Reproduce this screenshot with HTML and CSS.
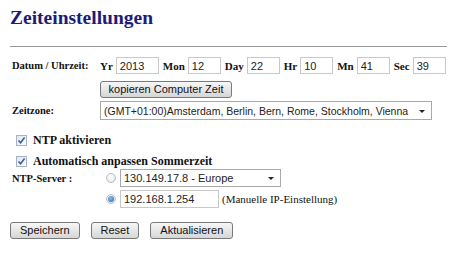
FILE: index.html
```html
<!DOCTYPE html>
<html lang="de">
<head>
  <meta charset="UTF-8" />
  <title>Zeiteinstellungen</title>
  <link rel="stylesheet" href="styles.css">
</head>
<body>
  <h1 class="title">Zeiteinstellungen</h1>
  <div class="rule"></div>

  <div class="form">
    <div class="row date-row">
      <span class="label">Datum / Uhrzeit:</span>
      <div class="fields">
        <span class="unit">Yr</span><input class="num wide" type="text" value="2013">
        <span class="unit">Mon</span><input class="num" type="text" value="12">
        <span class="unit">Day</span><input class="num" type="text" value="22">
        <span class="unit">Hr</span><input class="num" type="text" value="10">
        <span class="unit">Mn</span><input class="num" type="text" value="41">
        <span class="unit">Sec</span><input class="num" type="text" value="39">
      </div>
    </div>

    <div class="row copy-row">
      <span class="label"></span>
      <div><button class="btn">kopieren Computer Zeit</button></div>
    </div>

    <div class="row zone-row">
      <span class="label">Zeitzone:</span>
      <div class="select zone-select">
        <span class="select-text">(GMT+01:00)Amsterdam, Berlin, Bern, Rome, Stockholm, Vienna</span>
        <span class="arrow"></span>
      </div>
    </div>

    <div class="check-row first">
      <span class="check"><svg width="9" height="9" viewBox="0 0 9 9"><path d="M1.5 4.5 L3.6 6.8 L7.6 1.6" fill="none" stroke="#3a5fa8" stroke-width="1.6"/></svg></span>
      <span class="check-label">NTP aktivieren</span>
    </div>
    <div class="check-row">
      <span class="check"><svg width="9" height="9" viewBox="0 0 9 9"><path d="M1.5 4.5 L3.6 6.8 L7.6 1.6" fill="none" stroke="#3a5fa8" stroke-width="1.6"/></svg></span>
      <span class="check-label">Automatisch anpassen Sommerzeit</span>
    </div>

    <div class="row ntp-row">
      <span class="label">NTP-Server :</span>
      <div class="server-line">
        <span class="radio"></span>
        <div class="select server-select">
          <span class="select-text">130.149.17.8 - Europe</span>
          <span class="arrow"></span>
        </div>
      </div>
    </div>
    <div class="row manual-row">
      <span class="label"></span>
      <div class="server-line">
        <span class="radio on"></span>
        <input class="ip" type="text" value="192.168.1.254">
        <span class="note">(Manuelle IP-Einstellung)</span>
      </div>
    </div>

    <div class="actions">
      <button class="btn">Speichern</button>
      <button class="btn">Reset</button>
      <button class="btn">Aktualisieren</button>
    </div>
  </div>
</body>
</html>
```

FILE: styles.css
```css
body {
  margin: 0;
  padding: 0;
  background-color: #ffffff;
  font-family: "Liberation Serif", "Times New Roman", serif;
  color: #111;
}
.title {
  margin: 0;
  padding: 6px 0 0 10px;
  font-size: 19.5px;
  line-height: 24px;
  color: #1c1c78;
}
.rule {
  margin: 16px 3px 0 10px;
  height: 1px;
  background-color: #9a9a9a;
}

.form {
  padding-left: 12px;
}
.row {
  display: flex;
  align-items: center;
}
.label {
  width: 88px;
  flex-shrink: 0;
  font-size: 10.5px;
  font-weight: bold;
}
.fields {
  display: flex;
  align-items: center;
}
.unit {
  font-size: 11px;
  font-weight: bold;
  margin-right: 3px;
}
input {
  font-family: "Liberation Sans", Arial, sans-serif;
  font-size: 11px;
  color: #222;
  border: 1px solid #c9c9c9;
  box-sizing: border-box;
  outline: none;
  padding: 0 3px;
}
.num {
  width: 33px;
  height: 17px;
  margin-right: 4px;
}
.num.wide {
  width: 43px;
}
.date-row {
  margin-top: 10px;
}
.copy-row {
  margin-top: 5px;
}
.btn {
  font-family: "Liberation Sans", Arial, sans-serif;
  font-size: 11px;
  color: #111;
  height: 17px;
  padding: 0 6px;
  border: 1px solid #7a7a7a;
  border-radius: 3px;
  background: linear-gradient(#f7f7f7, #e6e6e6 50%, #d6d6d6);
  line-height: 15px;
  white-space: nowrap;
}
.copy-row .btn {
  width: 132px;
}

.select {
  position: relative;
  box-sizing: border-box;
  border: 1px solid #a9a9a9;
  background: #fff;
  font-family: "Liberation Sans", Arial, sans-serif;
  font-size: 11px;
  color: #222;
  display: flex;
  align-items: center;
  padding-left: 3px;
  white-space: nowrap;
}
.arrow {
  position: absolute;
  right: 6px;
  top: 50%;
  margin-top: -1px;
  border-left: 3px solid transparent;
  border-right: 3px solid transparent;
  border-top: 3px solid #222;
}
.zone-row {
  margin-top: 3px;
}
.zone-select {
  width: 332px;
  height: 19px;
  font-size: 10.5px;
}

.check-row {
  display: flex;
  align-items: center;
  margin-left: 4px;
  margin-top: 9px;
  height: 12px;
}
.check-row.first {
  margin-top: 14px;
}
.check {
  width: 11px;
  height: 11px;
  box-sizing: border-box;
  border: 1px solid #a8b4c4;
  background: linear-gradient(135deg, #dfe6ee, #fafbfc);
  display: flex;
  align-items: center;
  justify-content: center;
  margin-right: 6px;
}
.check-label {
  font-size: 12px;
  font-weight: bold;
}

.ntp-row {
  margin-top: 2px;
}
.server-line {
  display: flex;
  align-items: center;
}
.radio {
  width: 10px;
  height: 10px;
  box-sizing: border-box;
  border-radius: 50%;
  border: 1px solid #b8bec6;
  background: radial-gradient(circle at 40% 40%, #ffffff, #dfe3e8);
  margin: 0 4px 0 6px;
  position: relative;
}
.radio.on::after {
  content: "";
  position: absolute;
  left: 1px;
  top: 1px;
  width: 6px;
  height: 6px;
  border-radius: 50%;
  background: radial-gradient(circle at 40% 35%, #8fc3ee, #1d5fa6);
}
.server-select {
  width: 161px;
  height: 18px;
}
.manual-row {
  margin-top: 3px;
}
.ip {
  width: 99px;
  height: 18px;
}
.note {
  font-size: 11px;
  margin-left: 3px;
}

.actions {
  display: flex;
  gap: 11px;
  margin: 14px 0 0 -2px;
}
.actions .btn {
  padding: 0 9px;
}
```
